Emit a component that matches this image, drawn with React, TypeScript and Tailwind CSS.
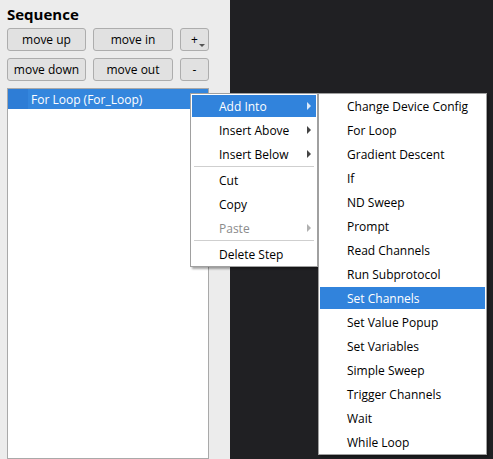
const font = { fontFamily: '"Open Sans", "Noto Sans", sans-serif' };

const Btn = ({ label, arrow }: { label: string; arrow?: boolean }) => (
  <button className="relative h-[23px] rounded-[3px] border border-[#adadad] bg-[#e1e1e1] text-[12px] text-black">
    {label}
    {arrow && (
      <span className="absolute right-[3px] bottom-[3px] h-0 w-0 border-x-[3px] border-t-[3px] border-x-transparent border-t-[#555]" />
    )}
  </button>
);

const Arrow = ({ color }: { color: string }) => (
  <span
    className="absolute right-[5px] top-1/2 h-0 w-0 -translate-y-1/2 border-y-[4px] border-l-[4px] border-y-transparent"
    style={{ borderLeftColor: color }}
  />
);

const Sep = () => <div className="mx-[3px] h-[2px] border-t border-[#cfcfcf]" />;

const Item = ({ label, active, disabled, sub }: { label: string; active?: boolean; disabled?: boolean; sub?: boolean }) => (
  <div className="relative h-[24px] px-px py-px">
    <div
      className={`relative flex h-[22px] items-center pl-[27px] pt-[2px] text-[12px] ${active ? 'bg-[#3183dc] text-white' : disabled ? 'text-[#8b8b8b]' : 'text-black'}`}
    >
      {label}
      {sub && <Arrow color={active ? '#dbe9f9' : disabled ? '#b0b0b0' : '#444'} />}
    </div>
  </div>
);

const steps = [
  'Change Device Config',
  'For Loop',
  'Gradient Descent',
  'If',
  'ND Sweep',
  'Prompt',
  'Read Channels',
  'Run Subprotocol',
  'Set Channels',
  'Set Value Popup',
  'Set Variables',
  'Simple Sweep',
  'Trigger Channels',
  'Wait',
  'While Loop',
];

export default function App() {
  return (
    <div className="relative flex h-[459px] w-[493px] overflow-hidden" style={font}>
      <div className="flex w-[230px] flex-col bg-[#ececec] pl-[7px] pr-[21px]">
        <h1 className="mt-[3px] h-[25px] text-[15px] leading-[22px] font-bold text-black">Sequence</h1>
        <div className="grid grid-cols-[79px_80px_29px] gap-[7px]">
          <Btn label="move up" />
          <Btn label="move in" />
          <Btn label="+" arrow />
          <Btn label="move down" />
          <Btn label="move out" />
          <Btn label="-" />
        </div>
        <div className="mt-[7px] flex-1 border border-[#a9a9a9] bg-white">
          <div className="flex h-[20px]">
            <div className="w-[20px] bg-[#2e7dd6]" />
            <div className="flex flex-1 items-center bg-[#3486dd] pl-[3px] pt-px text-[12px] text-white">For Loop (For_Loop)</div>
          </div>
        </div>
      </div>
      <div className="flex-1 bg-[#202023]" />

      <div className="absolute left-[190px] top-[93px] w-[128px] border border-[#a0a0a0] bg-white shadow-[2px_2px_2px_rgba(0,0,0,0.35)]">
        <Item label="Add Into" active sub />
        <Item label="Insert Above" sub />
        <Item label="Insert Below" sub />
        <Sep />
        <Item label="Cut" />
        <Item label="Copy" />
        <Item label="Paste" disabled sub />
        <Sep />
        <Item label="Delete Step" />
      </div>

      <div className="absolute left-[318px] top-[93px] w-[169px] border border-[#a0a0a0] bg-white shadow-[2px_2px_2px_rgba(0,0,0,0.35)]">
        {steps.map((s) => (
          <Item key={s} label={s} active={s === 'Set Channels'} />
        ))}
      </div>
    </div>
  );
}
